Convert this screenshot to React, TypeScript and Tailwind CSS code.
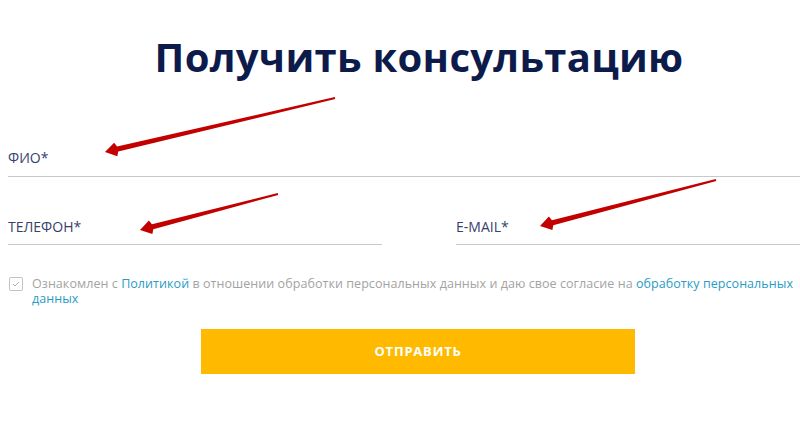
import React from "react";

// Consultation request form with annotation arrows drawn over it.
function Arrow({ x1, y1, x2, y2 }: { x1: number; y1: number; x2: number; y2: number }) {
  const dx = x2 - x1;
  const dy = y2 - y1;
  const len = Math.hypot(dx, dy);
  const ux = dx / len;
  const uy = dy / len;
  const nx = -uy;
  const ny = ux;
  const head = 13;
  const bx = x2 - ux * head;
  const by = y2 - uy * head;
  const tail = 1;
  const neck = 2.6;
  const barb = 7;
  const pts = [
    [x1 + nx * tail, y1 + ny * tail],
    [bx + nx * neck, by + ny * neck],
    [bx + ux * 2 + nx * barb, by + uy * 2 + ny * barb],
    [x2, y2],
    [bx + ux * 2 - nx * barb, by + uy * 2 - ny * barb],
    [bx - nx * neck, by - ny * neck],
    [x1 - nx * tail, y1 - ny * tail],
  ]
    .map((p) => p.join(","))
    .join(" ");
  return <polygon points={pts} fill="#c30000" />;
}

export default function App() {
  return (
    <main
      className="relative h-[428px] w-[800px] overflow-hidden bg-white"
      style={{ fontFamily: '"Open Sans", "Liberation Sans", sans-serif' }}
    >
      <h1 className="pt-[29px] pl-[38px] text-center text-[40px] font-bold leading-[56px] tracking-[0.3px] text-[#0d1b4b]">
        Получить консультацию
      </h1>

      <div className="mt-[63px] pl-2">
        <div className="border-b border-[#c9c9c9] pb-[8px] text-[14px] leading-[20px] text-[#38416b]">ФИО*</div>

        <div className="mt-[40px] flex">
          <div className="w-[374px] border-b border-[#c9c9c9] pb-[7px] text-[14px] leading-[20px] text-[#38416b]">
            ТЕЛЕФОН*
          </div>
          <div className="ml-[74px] flex-1 border-b border-[#c9c9c9] pb-[7px] text-[14px] leading-[20px] text-[#38416b]">
            E-MAIL*
          </div>
        </div>

        <div className="mt-[31px] flex items-start gap-[9px] pl-[1px]">
          <div className="mt-[1px] flex h-[14px] w-[14px] shrink-0 items-center justify-center rounded-[2px] border border-[#c4c4c4]">
            <svg width="8" height="6" viewBox="0 0 8 6" fill="none">
              <path d="M1 3l2 2 4-4" stroke="#b0b0b0" strokeWidth="1" />
            </svg>
          </div>
          <p className="text-[12.5px] leading-[15px] tracking-[0.06px] text-[#a3a3a3]">
            Ознакомлен с <span className="text-[#2a9cc4]">Политикой</span> в отношении обработки персональных данных и даю
            свое согласие на <span className="text-[#2a9cc4]">обработку персональных данных</span>
          </p>
        </div>

        <div className="mt-[23px] flex pl-[193px]">
          <button className="h-[45px] w-[434px] bg-[#ffba00] text-[13px] font-bold tracking-[0.8px] text-white">
            ОТПРАВИТЬ
          </button>
        </div>
      </div>

      <svg className="pointer-events-none absolute inset-0" width="800" height="428">
        <Arrow x1={335} y1={98} x2={105} y2={152} />
        <Arrow x1={278} y1={194} x2={140} y2={230} />
        <Arrow x1={716} y1={180} x2={540} y2={226} />
      </svg>
    </main>
  );
}
